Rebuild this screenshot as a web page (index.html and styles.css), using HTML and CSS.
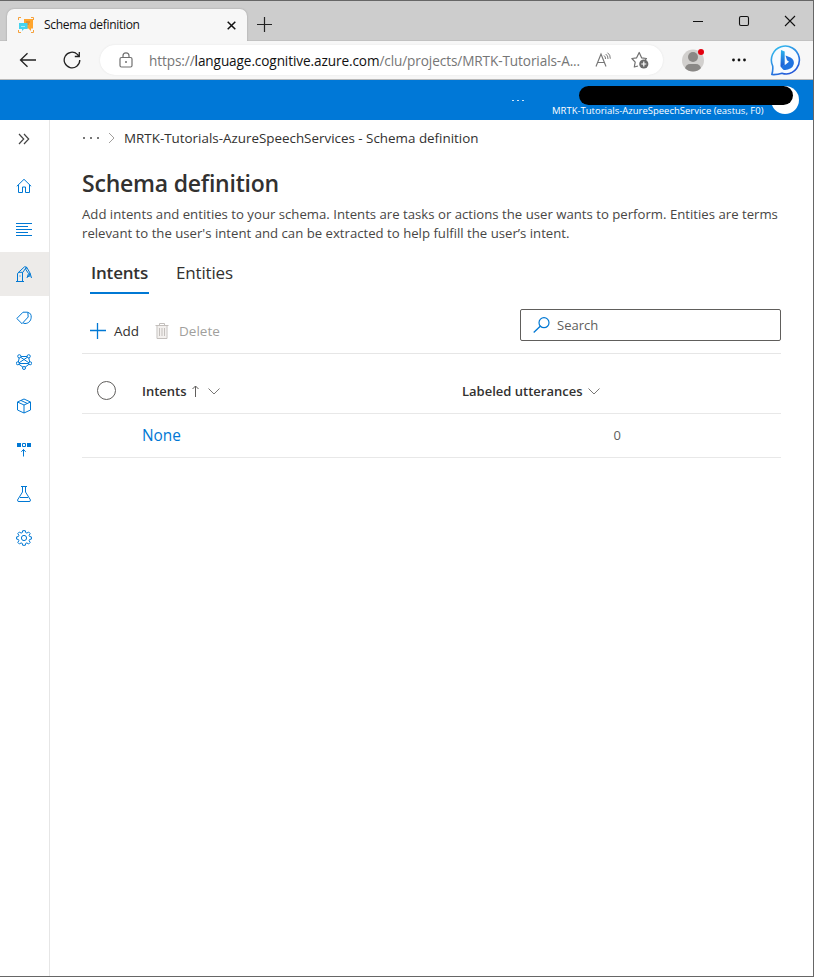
FILE: index.html
```html
<!DOCTYPE html>
<html lang="en">
<head>
<meta charset="utf-8">
<title>Schema definition</title>
<link rel="stylesheet" href="styles.css">
</head>
<body>
<div class="window">
  <div class="titlebar">
    <div class="tab">
      <svg class="favicon" width="16" height="16" viewBox="0 0 16 16"><path d="M.5 3V.5H3M13 .5h2.500V3M.5 13v2.500H3M13 15.500h2.500V13" fill="none" stroke="#f5a13c"/><path d="M6 2h9v9.500h-2V14l-2.500-2.500H6z" fill="#ffa52e"/><path d="M8 5h4M8 7h3" stroke="#c87b2c"/><path d="M1 6h8.500v6H6l-2 2v-2H1z" fill="#45d3ee"/><path d="M3 9.500h4" stroke="#a5edfa"/></svg>
      <span class="tab-title t">Schema definition</span>
      <svg class="tab-close" width="9" height="9" viewBox="0 0 9 9"><path d="M.7.7l7.600 7.600M8.300.7L.7 8.300" stroke="#111" stroke-width="1.500"/></svg>
    </div>
    <svg class="new-tab" width="15" height="15" viewBox="0 0 15 15"><path d="M7.500 0v15M0 7.500h15" stroke="#222" stroke-width="1.200"/></svg>
    <div class="win-buttons">
      <svg width="12" height="12" viewBox="0 0 12 12"><path d="M1 6.500h10" stroke="#111"/></svg>
      <svg width="12" height="12" viewBox="0 0 12 12"><rect x="1.500" y="1.500" width="9" height="9" rx="1.500" fill="none" stroke="#111" stroke-width="1.100"/></svg>
      <svg width="12" height="12" viewBox="0 0 12 12"><path d="M1 1l10 10M11 1L1 11" stroke="#111" stroke-width="1.100"/></svg>
    </div>
  </div>

  <div class="toolbar">
    <svg class="back" width="18" height="16" viewBox="0 0 18 16"><path d="M17 8H1.500M8.500 1.200L1.500 8l7 6.800" fill="none" stroke="#222" stroke-width="1.300"/></svg>
    <svg class="reload" width="18" height="18" viewBox="0 0 18 18"><path d="M16.800 9a7.800 7.800 0 1 1-2.400-5.600L16 5.200M16.300 1v4.500h-4.500" fill="none" stroke="#222" stroke-width="1.300"/></svg>
    <div class="address">
      <svg class="lock" width="14" height="16" viewBox="0 0 14 16"><rect x="1" y="5.500" width="12" height="9.500" rx="1.500" fill="none" stroke="#707070" stroke-width="1.200"/><path d="M4 5.500V3.800a3 3 0 0 1 6 0v1.700" fill="none" stroke="#707070" stroke-width="1.200"/><circle cx="7" cy="10" r="1" fill="#707070"/></svg>
      <span class="url t">https://<b>language.cognitive.azure.com</b>/clu/projects/MRTK-Tutorials-A...</span>
      <svg class="read" width="17" height="16" viewBox="0 0 17 16"><path d="M1 14.500L6 2l5 12.500M2.800 10.500h6.400" fill="none" stroke="#777" stroke-width="1.150"/><path d="M9 3.500q1.700 1.200 1.500 3.500M10.700 2q2.500 1.700 2.300 5M12.500.7q3 2 2.800 6" fill="none" stroke="#777" stroke-width="1"/></svg>
      <svg class="star" width="18" height="18" viewBox="0 0 18 18"><path d="M7 15l-3.700 1 .9-4.800L.9 7.500l4.600-.6L8.200 1.500l2.500 5.400 4.800.6-1.300 1.300" fill="none" stroke="#707070" stroke-width="1.200" stroke-linejoin="round"/><circle cx="12.800" cy="13" r="4.600" fill="#6b6b6b"/><path d="M12.800 10.500v5M10.300 13h5" stroke="#fff" stroke-width="1.200"/></svg>
    </div>
    <svg class="profile" width="24" height="24" viewBox="0 0 24 24"><clipPath id="face"><circle cx="11" cy="12.500" r="11"/></clipPath><circle cx="11" cy="12.500" r="11" fill="#d2d0ce"/><g clip-path="url(#face)" fill="#8a8886"><circle cx="11" cy="9" r="5"/><rect x="3" y="16" width="16" height="12" rx="5"/></g><circle cx="19" cy="4" r="3" fill="#e3000f"/></svg>
    <svg class="more" width="14" height="4" viewBox="0 0 14 4"><g fill="#111"><circle cx="1.500" cy="2" r="1.400"/><circle cx="7" cy="2" r="1.400"/><circle cx="12.500" cy="2" r="1.400"/></g></svg>
    <svg class="bing" width="32" height="32" viewBox="0 0 32 32"><defs><linearGradient id="ring" x1="0" y1="0" x2=".6" y2="1"><stop offset="0" stop-color="#36c5f0"/><stop offset="1" stop-color="#2458d8"/></linearGradient><linearGradient id="bee" x1="0" y1="0" x2="0" y2="1"><stop offset="0" stop-color="#2bb5ee"/><stop offset="1" stop-color="#1a50d0"/></linearGradient></defs><path d="M1.800 30.500q1.400-4 .9-8.500A14 14 0 1 1 16.500 30q-2.500 0-4.500-.8-5 1.700-10.200 1.300z" fill="#f8fbff" stroke="url(#ring)" stroke-width="1.600" stroke-linejoin="round"/><path d="M11 6l3.700 1.500v12.800l-3.400 3.500q-.8-1-.8-2.500z" fill="url(#bee)"/><path d="M15.500 11.500l5 2q4 2 3.300 6.500-.8 3-3 4.200-4.500 2.600-7.500 1.500-2-1-2-3.900l4-1 3.700-3-2-1.500z" fill="#1f72e0"/></svg>
  </div>

  <header class="azure">
    <span class="azure-more"><i></i><i></i><i></i></span>
    <div class="account">
      <div class="redacted"></div>
      <div class="resource"><span class="t">MRTK-Tutorials-AzureSpeechService (eastus, F0)</span></div>
    </div>
    <div class="avatar"></div>
  </header>

  <div class="body">
    <nav class="side">
      <a class="expand"><svg width="12" height="12" viewBox="0 0 12 12"><path d="M1 1l4.700 5L1 11M6 1l4.700 5L6 11" fill="none" stroke="#444" stroke-width="1.200"/></svg></a>
      <a><svg width="16" height="16" viewBox="0 0 16 16"><path d="M.8 8.300L8 1.300l7.200 7M2.500 7v7.500h4V9h3v5.500h4V7"/></svg></a>
      <a><svg width="16" height="16" viewBox="0 0 16 16"><path d="M0 1.500h16M0 4.500h12M0 7.500h16M0 10.500h12M0 13.500h16"/></svg></a>
      <a class="active"><svg width="16" height="16" viewBox="0 0 16 16"><path d="M0 15.500h8M1.500 15.500V7.500L3 6.300h3.500v9.200M1.800 7L8.500.8l2 .2L6.700 6.500M4 9.500v1M10.500 1l3.500 6-1.500 4M10.500 1L9.800 3.500l2.700 4M12.500 7.500L11 12M14 7l1.500 5M12 10h2.500"/></svg></a>
      <a><svg width="16" height="16" viewBox="0 0 16 16"><path d="M.8 8.500L7 2.200h4.800l.4 4.800-6.200 6.700zM12 2.500c2.200.3 3.400 2.300 3.200 4.700-.2 4-3 6.300-6.200 6.300-1 0-1.500-.3-2-.8"/></svg></a>
      <a><svg width="16" height="16" viewBox="0 0 16 16"><path d="M3.500 2.500h9l1.500 7-6 4.500-6-4.500zM3.500 2.500L14 9.500M12.500 2.500L2 9.500h12"/><g fill="#fff"><circle cx="3.300" cy="2.300" r="1.600"/><circle cx="12.700" cy="2.300" r="1.600"/><circle cx="1.800" cy="9.300" r="1.500"/><circle cx="14.200" cy="9.300" r="1.500"/><circle cx="8" cy="14" r="1.500"/></g></svg></a>
      <a><svg width="16" height="16" viewBox="0 0 16 16"><path d="M1.500 4L8 1l6.500 3v8L8 15l-6.500-3zM1.500 4L8 7l6.500-3M8 7v8M5 2.500l6.500 3"/></svg></a>
      <a><svg width="16" height="16" viewBox="0 0 16 16"><path d="M1 1h4v4H1zM11 1h4v4h-4z" fill="#0078d4" stroke="none"/><path d="M6.500 1.500h3v3h-3zM7.500 14.500v-7M5.300 9.800l2.200-2.300 2.200 2.300"/></svg></a>
      <a><svg width="16" height="16" viewBox="0 0 16 16"><path d="M5 .5h6M6.500.5v5.500L1.500 14l.6 1.500h11.800l.6-1.500-5-8V.5M4 11.500h8"/></svg></a>
      <a><svg width="16" height="16" viewBox="0 0 16 16"><circle cx="8" cy="8" r="2.600"/><path d="M6.700.7h2.600l.4 1.900 1.200.5 1.700-1.100 1.600 1.600-1.100 1.700.5 1.200 1.800.4v2.200l-1.800.4-.5 1.200 1.100 1.700-1.600 1.600-1.700-1.100-1.200.5-.4 1.900H6.700l-.4-1.900-1.200-.5L3.400 14l-1.600-1.600 1.100-1.700-.5-1.200L.6 9.100V6.900l1.800-.4.5-1.200-1.100-1.700L3.400 2l1.700 1.100 1.200-.5z"/></svg></a>
    </nav>

    <main class="main">
      <div class="crumbs">
        <span class="crumb-more"><i></i><i></i><i></i></span>
        <svg width="7" height="12" viewBox="0 0 7 12"><path d="M1 1l5 5-5 5" fill="none" stroke="#a19f9d"/></svg>
        <span class="crumb t">MRTK-Tutorials-AzureSpeechServices - Schema definition</span>
      </div>
      <h1 class="t">Schema definition</h1>
      <p class="intro"><span class="t">Add intents and entities to your schema. Intents are tasks or actions the user wants to perform. Entities are terms</span><br><span class="t">relevant to the user's intent and can be extracted to help fulfill the user’s intent.</span></p>
      <div class="tabs">
        <div class="pivot selected"><span class="t">Intents</span></div>
        <div class="pivot"><span class="t">Entities</span></div>
      </div>
      <div class="commands">
        <svg class="plus" width="16" height="16" viewBox="0 0 16 16"><path d="M7.500 0v16M0 7.500h16" fill="none" stroke="#0078d4" stroke-width="1.300"/></svg>
        <span class="add t">Add</span>
        <svg class="bin" width="14" height="16" viewBox="0 0 14 16"><path d="M2.500 3h9v12h-9z" fill="#f3f0ee"/><path d="M.5 2.500h13M4.500 2.500v-2h5v2M2 2.500v13h10v-13M4.500 5v8M7 5v8M9.500 5v8" fill="none" stroke="#c3bfbc"/></svg>
        <span class="delete t">Delete</span>
        <div class="search">
          <svg width="17" height="16" viewBox="0 0 17 16"><circle cx="11" cy="5.700" r="5" fill="none" stroke="#0078d4" stroke-width="1.200"/><path d="M7.500 9L.7 15.500" stroke="#0078d4" stroke-width="1.300"/></svg>
          <span class="t">Search</span>
        </div>
      </div>
      <div class="grid head">
        <div class="check"></div>
        <div class="col"><span class="t">Intents</span>
          <svg class="up" width="8" height="12" viewBox="0 0 8 12"><path d="M3.500 12V1M.5 4l3-3 3 3" fill="none" stroke="#605e5c"/></svg>
          <svg width="12" height="7" viewBox="0 0 12 7"><path d="M.5.5L6 6 11.500.5" fill="none" stroke="#797775"/></svg></div>
        <div class="col"><span class="t">Labeled utterances</span>
          <svg class="chev" width="12" height="7" viewBox="0 0 12 7"><path d="M.5.5L6 6 11.500.5" fill="none" stroke="#797775"/></svg></div>
      </div>
      <div class="grid row">
        <div></div>
        <a class="name t">None</a>
        <div class="count t">0</div>
      </div>
    </main>
  </div>
</div>
</body>
</html>
```

FILE: styles.css
```css
* { box-sizing: border-box; }
body { margin: 0; background: #fff; color: #323130; font-family: "Open Sans", "Noto Sans", sans-serif; }
svg { display: block; flex: none; }
.window { width: 814px; height: 977px; display: flex; flex-direction: column; border: solid #666; border-width: 1px 1px 1px 0; overflow: hidden; }
.t { white-space: nowrap; }

.titlebar { height: 40px; flex: none; display: flex; background: #cdcdcd; padding: 8px 17px 0 7px; box-shadow: inset 0 -1px #c2c2c2; }
.tab { width: 240px; height: 32px; display: flex; align-items: center; background: #f7f7f7; border-radius: 7px 7px 0 0; padding: 0 11px; box-shadow: 0 0 2px #999; clip-path: inset(-3px -3px 0 -3px); }
.tab-title { margin: -1px 0 0 10px; font-size: 12px; letter-spacing: -0.3px; color: #111; }
.tab-close { margin-left: auto; }
.new-tab { margin: 8px 0 0 10px; }
.win-buttons { margin: 6px 0 0 auto; display: flex; gap: 34px; }

.toolbar { height: 39px; flex: none; display: flex; align-items: center; background: #f7f7f7; border-bottom: 1px solid #b9b9b9; padding: 0 11px 0 19px; }
.reload { margin-left: 26px; }
.address { width: 563px; height: 30px; margin-left: 19px; border-radius: 15px; background: #fff; display: flex; align-items: center; padding: 0 14px 0 19px; box-shadow: 0 0 2px #e2e2e2; }
.url { margin-left: 16px; font-size: 13.600px; letter-spacing: -0.1px; color: #767676; }
.url b { font-weight: 400; color: #111; }
.read { margin-left: auto; }
.star { margin-left: 19px; }
.profile { margin-left: 19px; }
.more { margin-left: 26px; }
.bing { margin-left: auto; }

.azure { height: 40px; flex: none; display: flex; background: #0078d7; color: #fff; }
.azure-more { display: flex; gap: 3px; margin: 20px 0 0 512px; }
.azure-more i { width: 2px; height: 1px; background: #cfe5f8; }
.account { position: relative; z-index: 1; margin-left: 28px; padding-top: 6px; width: 219px; }
.redacted { width: 214px; height: 19px; margin-left: 27px; border-radius: 10px; background: #000; }
.resource { font-size: 9.500px; line-height: 12px; }
.avatar { width: 28px; height: 28px; margin-top: 6px; border-radius: 50%; background: #fff; }

.body { flex: 1; display: flex; min-height: 0; }
.side { width: 50px; flex: none; border-right: 1px solid #e6e6e6; display: flex; flex-direction: column; }
.side a { height: 44px; display: flex; align-items: center; padding-left: 16px; }
.side a svg { fill: none; stroke: #0078d4; stroke-width: 1; }
.side .expand { padding: 0 0 7px 18px; }
.side .active { background: #edebe9; }

.main { flex: 1; padding: 0 32px; }
.crumbs { height: 36px; display: flex; align-items: center; padding-left: 1px; }
.crumb-more { display: flex; gap: 5px; margin-right: 9px; }
.crumb-more i { width: 2px; height: 2px; background: #777; }
.crumb { margin-left: 9px; font-size: 13.400px; }
h1 { margin: 11px 0 0; font-size: 23px; line-height: 32px; font-weight: 600; letter-spacing: -0.22px; }
.intro { margin: 6px 0 0; font-size: 13.180px; line-height: 19px; color: #484644; }
.tabs { display: flex; margin: 8px 0 0 8px; }
.pivot { height: 43px; width: 59px; line-height: 43px; font-size: 17px; letter-spacing: -0.18px; text-align: center; margin-right: 26px; }
.selected { font-weight: 600; border-bottom: 2px solid #0078d4; }
.commands { display: flex; align-items: center; height: 60px; padding: 14px 0 0 8px; border-bottom: 1px solid #e6e6e6; font-size: 13.500px; }
.add { margin-left: 8px; }
.bin { margin-left: 16px; }
.delete { margin-left: 10px; color: #a19f9d; }
.search { margin: -12px 0 0 auto; width: 261px; height: 32px; border: 1px solid #605e5c; border-radius: 2px; display: flex; align-items: center; padding-left: 12px; gap: 7px; font-size: 13px; color: #605e5c; }
.grid { display: grid; grid-template-columns: 60px 320px 319px; align-items: center; border-bottom: 1px solid #e8e8e8; }
.head { height: 60px; padding-top: 15px; font-size: 13px; font-weight: 600; }
.check { width: 19px; height: 19px; margin: -1px 0 0 15px; border: 1px solid #605e5c; border-radius: 50%; }
.col { display: flex; align-items: center; }
.up { margin: 0 8px 0 5px; }
.chev { margin-left: 5px; }
.row { height: 44px; padding-bottom: 1px; }
.name { color: #0078d4; font-size: 15.400px; }
.count { width: 159px; text-align: right; font-size: 13px; color: #605e5c; }
```
